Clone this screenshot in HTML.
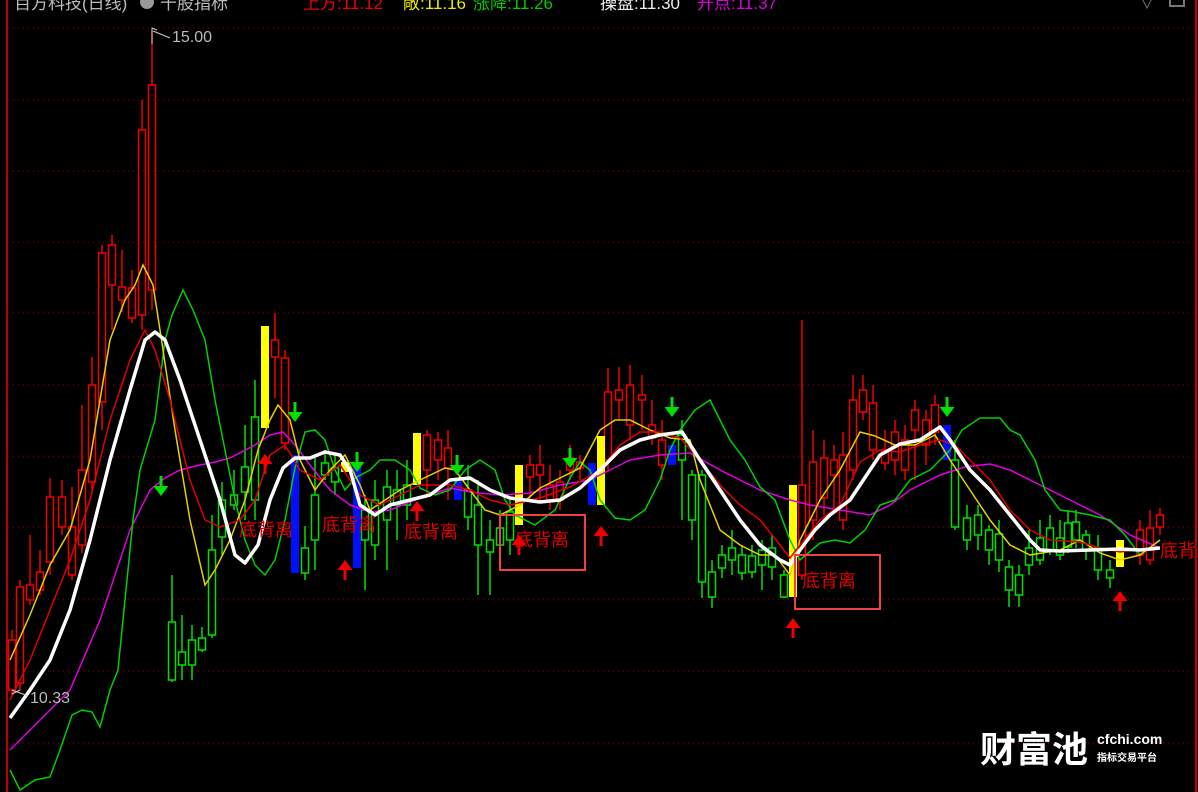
<!DOCTYPE html>
<html><head><meta charset="utf-8"><style>
html,body{margin:0;padding:0;background:#000;width:1198px;height:792px;overflow:hidden}
svg{display:block}
text{font-family:"Liberation Sans","Noto Sans CJK SC",sans-serif}
</style></head><body>
<svg id="s" width="1198" height="792" xmlns="http://www.w3.org/2000/svg">
<rect width="1198" height="792" fill="#000"/>
<g id="grid" stroke="#a00000" stroke-width="1" stroke-dasharray="1,4"></g>
<line x1="7" y1="0" x2="7" y2="792" stroke="#c00000" stroke-width="2"/>
<line x1="1196" y1="0" x2="1196" y2="792" stroke="#c00000" stroke-width="2"/>
<g id="candles"></g>
<g id="lines" fill="none"></g>
<g id="marks"></g>
<text x="14" y="9" fill="#bbb" font-size="17">百方科技(日线)</text>
<circle cx="147" cy="2" r="7" fill="#999"/>
<text x="160" y="9" fill="#bbb" font-size="17">千股指标</text>
<text x="303" y="9" fill="#e00" font-size="17">上方:11.12</text>
<text x="403" y="9" fill="#ee0" font-size="17">敞:11.16</text>
<text x="473" y="9" fill="#0c0" font-size="17">涨降:11.26</text>
<text x="600" y="9" fill="#eee" font-size="17">操盘:11.30</text>
<text x="697" y="9" fill="#d0d" font-size="17">开点:11.37</text>
<text x="1140" y="9" fill="#777" font-size="14">∨</text>
<rect x="1170" y="-6" width="14" height="12" fill="none" stroke="#777" stroke-width="2"/>
<path d="M152 44 L152 28 L157 30 M153 31 L170 38" stroke="#ccc" stroke-width="1" fill="none"/>
<text x="172" y="42" fill="#bbb" font-size="16">15.00</text>
<path d="M12 694 L20 690 M12 690 L28 696" stroke="#ccc" stroke-width="1" fill="none"/>
<text x="30" y="703" fill="#bbb" font-size="16">10.33</text>
<text x="980" y="762" fill="#fff" font-size="36" font-weight="bold" font-family="'Noto Sans CJK SC',sans-serif">财富池</text>
<text x="1097" y="744" fill="#fff" font-size="14" font-weight="bold">cfchi.com</text>
<text x="1097" y="761" fill="#fff" font-size="10" font-weight="bold" font-family="'Noto Sans CJK SC',sans-serif">指标交易平台</text>
</svg>
<script>
var NS="http://www.w3.org/2000/svg";
function el(p,t,a){var e=document.createElementNS(NS,t);for(var k in a)e.setAttribute(k,a[k]);p.appendChild(e);return e;}
var grid=document.getElementById('grid');
[28,100,171,242,313,385,457,527,599,671,743].forEach(function(y){el(grid,'line',{x1:8,y1:y,x2:1195,y2:y});});
var C={r:'#f00000',g:'#00e000'};
var cd=[[12,640,690,630,695,'r'],[20,587,683,580,690,'r'],[30,585,600,535,605,'r'],[40,572,590,550,595,'r'],[50,497,562,478,575,'r'],[62,497,527,480,535,'r'],[72,527,575,487,580,'r'],[82,470,545,405,553,'r'],[92,385,482,357,490,'r'],[102,253,402,245,430,'r'],[112,245,285,235,330,'r'],[122,287,300,250,312,'r'],[132,288,318,270,323,'r'],[142,130,315,100,330,'r'],[152,85,290,30,310,'r'],
[172,622,680,575,682,'g'],[182,652,665,615,680,'g'],[192,640,665,625,680,'g'],[202,638,650,627,652,'g'],[212,550,635,515,638,'g'],[222,500,537,482,555,'g'],[234,495,505,470,510,'g'],[245,467,492,425,520,'g'],[255,417,500,380,520,'g'],[275,340,357,313,398,'r'],[285,358,443,350,450,'r'],[305,548,573,526,580,'g'],[315,495,540,455,570,'g'],[325,463,475,450,480,'g'],[335,468,482,455,495,'g'],[365,510,540,495,590,'g'],[375,500,545,480,560,'g'],[387,487,520,470,570,'g'],[397,490,505,470,540,'g'],[407,485,505,460,520,'g'],
[427,435,470,430,495,'r'],[438,440,460,432,480,'r'],[448,448,468,430,500,'r'],[468,490,517,465,530,'g'],[478,505,545,480,595,'g'],[490,540,552,520,595,'g'],[500,528,545,510,555,'g'],[510,512,540,500,555,'g'],
[530,465,477,455,500,'r'],[540,465,475,445,500,'r'],[550,485,500,465,510,'r'],[560,482,500,470,510,'r'],[570,458,470,445,480,'r'],[580,462,468,455,480,'r'],
[608,392,460,368,470,'r'],[619,390,400,367,420,'r'],[630,385,425,365,440,'r'],[642,395,400,375,430,'r'],[652,425,438,400,445,'r'],[662,440,465,420,480,'r'],
[682,435,460,420,520,'g'],[692,475,520,470,540,'g'],[702,475,582,470,598,'g'],[712,572,597,560,608,'g'],[722,555,568,545,578,'g'],[732,548,560,530,575,'g'],[742,555,573,545,580,'g'],[752,556,572,545,578,'g'],[762,550,565,540,590,'g'],[772,548,567,535,580,'g'],[784,575,597,570,598,'g'],
[802,485,575,320,580,'r'],[813,462,520,430,540,'r'],[824,458,498,440,515,'r'],[834,460,475,445,510,'r'],[843,455,520,432,530,'r'],[853,400,470,375,480,'r'],[863,390,412,375,420,'r'],[873,403,450,385,460,'r'],[885,450,463,430,470,'r'],[895,432,460,420,475,'r'],[905,440,470,425,480,'r'],[915,410,430,400,480,'r'],[926,420,445,410,465,'r'],[935,405,432,395,445,'r'],
[955,460,527,440,530,'g'],[967,518,540,505,550,'g'],[978,515,535,505,550,'g'],[989,530,550,525,565,'g'],[999,534,560,520,572,'g'],[1009,567,590,560,607,'g'],[1019,575,595,565,607,'g'],[1029,548,565,530,575,'g'],[1040,538,560,520,565,'g'],[1050,528,550,515,555,'g'],[1060,538,555,520,560,'g'],[1068,523,547,510,553,'g'],[1076,522,540,510,548,'g'],[1086,535,550,530,560,'g'],[1098,548,570,535,580,'g'],[1110,570,578,560,588,'g'],
[1140,530,555,520,565,'r'],[1150,528,560,510,565,'r'],[1160,515,527,508,535,'r']];
var cg=document.getElementById('candles');
cd.forEach(function(c){var col=C[c[5]];
el(cg,'line',{x1:c[0],y1:c[3],x2:c[0],y2:c[1],stroke:col,'stroke-width':1.5});
el(cg,'line',{x1:c[0],y1:c[2],x2:c[0],y2:c[4],stroke:col,'stroke-width':1.5});
el(cg,'rect',{x:c[0]-3.5,y:c[1],width:7,height:Math.max(1,c[2]-c[1]),fill:'none',stroke:col,'stroke-width':1.5});});
[[265,326,428],[345,462,472],[417,433,485],[519,465,525],[601,436,505],[793,485,597],[1120,540,567]].forEach(function(b){el(cg,'rect',{x:b[0]-4,y:b[1],width:8,height:b[2]-b[1],fill:'#ffff00'});});
[[295,455,573],[357,465,568],[458,478,500],[592,463,505],[672,445,465],[947,425,460]].forEach(function(b){el(cg,'rect',{x:b[0]-4,y:b[1],width:8,height:b[2]-b[1],fill:'#0010ff'});});
function P(a){return a.map(function(p){return p.join(',')}).join(' ');}
var lg=document.getElementById('lines');
var mag=[[10,750],[40,720],[70,690],[100,620],[130,530],[150,490],[165,478],[180,470],[200,465],[215,462],[230,458],[255,445],[270,435],[283,432],[295,445],[310,465],[330,490],[350,505],[370,512],[390,510],[420,498],[450,488],[470,492],[500,495],[530,493],[560,485],[590,480],[610,470],[630,460],[660,455],[690,453],[720,470],[760,490],[790,500],[810,505],[840,510],[870,515],[890,505],[910,490],[940,475],[965,467],[990,464],[1010,470],[1040,485],[1070,500],[1100,515],[1130,535],[1160,548]];
var grn=[[10,770],[20,790],[35,780],[50,777],[60,750],[72,715],[82,710],[92,712],[100,727],[110,690],[118,670],[125,600],[133,520],[140,470],[155,420],[165,340],[172,315],[183,290],[193,310],[205,340],[215,400],[225,450],[235,500],[245,540],[255,565],[265,575],[275,560],[285,520],[295,468],[305,432],[315,430],[325,440],[335,470],[345,490],[355,478],[370,470],[380,460],[395,460],[410,470],[420,488],[435,495],[450,490],[465,470],[480,460],[495,470],[505,500],[515,515],[535,525],[555,510],[570,478],[580,462],[590,470],[600,500],[615,518],[630,520],[645,510],[660,480],[670,450],[680,430],[695,410],[710,400],[730,440],[745,460],[760,487],[775,500],[790,540],[800,560],[820,543],[835,540],[850,543],[865,530],[880,505],[895,500],[910,480],[930,470],[950,450],[962,430],[980,418],[1000,418],[1010,430],[1020,435],[1035,460],[1045,490],[1060,510],[1075,512],[1090,515],[1110,520],[1125,535],[1140,555],[1160,540]];
var yel=[[10,660],[30,615],[50,565],[70,530],[90,460],[100,400],[110,340],[125,300],[135,285],[143,265],[153,285],[160,330],[175,430],[190,520],[205,585],[215,570],[230,540],[245,500],[258,450],[270,420],[278,405],[290,420],[300,460],[315,490],[330,470],[345,455],[360,485],[370,510],[385,500],[400,490],[420,480],[445,468],[455,470],[470,490],[485,510],[500,515],[520,505],[540,488],[560,478],[580,468],[600,430],[615,420],[630,420],[650,430],[670,438],[690,440],[700,480],[720,530],[740,545],[760,555],[775,555],[790,575],[800,540],[820,500],[840,470],[860,432],[875,436],[895,445],[915,445],[935,435],[950,460],[970,490],[990,520],[1010,545],[1030,555],[1060,550],[1080,540],[1100,553],[1120,560],[1140,555],[1160,540]];
var red=[[10,700],[30,660],[50,610],[70,560],[90,500],[110,420],[130,360],[145,330],[155,350],[170,400],[190,480],[205,520],[220,527],[240,520],[255,500],[270,455],[285,445],[300,470],[320,480],[340,465],[360,495],[380,505],[400,495],[420,485],[450,485],[470,490],[490,500],[510,505],[540,498],[570,487],[600,470],[620,445],[640,432],[660,432],[680,438],[700,460],[720,485],[740,505],[760,520],[780,545],[790,558],[800,545],[820,520],[840,505],[860,462],[880,450],[900,452],[920,445],[940,440],[955,445],[975,465],[990,480],[1010,510],[1030,530],[1050,540],[1080,542],[1100,548],[1120,552],[1150,548]];
var wht=[[10,718],[30,690],[50,660],[70,610],[90,540],[110,460],[130,390],[145,340],[155,332],[165,340],[180,380],[200,440],[220,500],[235,555],[245,563],[258,545],[270,500],[283,468],[295,458],[310,458],[325,452],[340,455],[350,470],[360,505],[375,515],[390,505],[410,500],[430,495],[450,480],[470,478],[490,490],[510,498],[540,502],[560,500],[580,488],[600,470],[620,450],[640,440],[660,435],[682,432],[700,460],[720,490],[740,520],[760,545],[780,560],[790,565],[800,550],[815,530],[830,515],[850,500],[870,470],[880,455],[900,444],[920,440],[940,427],[950,440],[970,470],[990,490],[1010,515],[1030,540],[1040,550],[1060,551],[1090,550],[1120,549],[1140,550],[1160,548]];
el(lg,'polyline',{points:P(mag),stroke:'#e000e0','stroke-width':1.5});
el(lg,'polyline',{points:P(grn),stroke:'#00d000','stroke-width':1.5});
el(lg,'polyline',{points:P(yel),stroke:'#e8d000','stroke-width':1.5});
el(lg,'polyline',{points:P(red),stroke:'#e00000','stroke-width':1.5});
el(lg,'polyline',{points:P(wht),stroke:'#ffffff','stroke-width':3.5,'stroke-linejoin':'round'});
var mg=document.getElementById('marks');
[[161,476],[295,402],[357,452],[457,455],[570,448],[672,397],[947,397]].forEach(function(a){var x=a[0],y=a[1];
el(mg,'path',{d:'M'+(x-1.5)+' '+y+' h3 v10 h6 l-7.5 10 l-7.5 -10 h6 z',fill:'#00e000'});});
[[265,454],[345,560],[417,501],[519,535],[601,526],[793,618],[1120,591]].forEach(function(a){var x=a[0],y=a[1];
el(mg,'path',{d:'M'+x+' '+y+' l7.5 10 h-6 v10 h-3 v-10 h-6 z',fill:'#f00000'});});
[[239,536],[322,531],[404,538],[515,546],[802,587]].forEach(function(a){var t=el(mg,'text',{x:a[0],y:a[1],fill:'#e00000','font-size':18});t.textContent='底背离';});
var t=el(mg,'text',{x:1160,y:557,fill:'#e00000','font-size':18});t.textContent='底背';
el(mg,'rect',{x:500,y:515,width:85,height:55,fill:'none',stroke:'#f04040','stroke-width':2});
el(mg,'rect',{x:795,y:555,width:85,height:54,fill:'none',stroke:'#f04040','stroke-width':2});
</script>
</body></html>
